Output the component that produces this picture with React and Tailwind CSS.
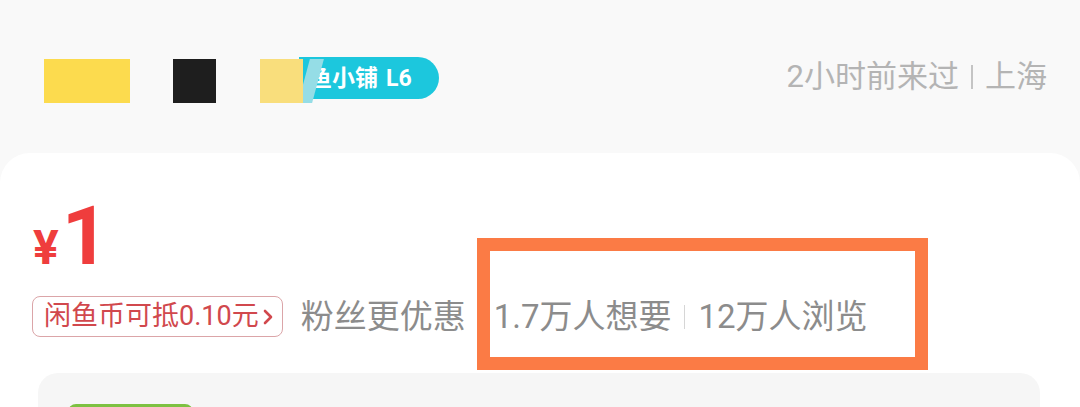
import React from "react";

const FONT = { fontFamily: '"Roboto", "Noto Sans CJK SC", sans-serif' };

function ShopBadge() {
  return (
    <div className="relative flex items-center">
      <div className="relative z-20 mt-[6px] h-[44px] w-[43px] bg-[#f9de7c]" />
      <div className="absolute left-[44px] top-[6px] z-10 h-[44px] w-[14px] -skew-x-[15deg] bg-[#95dde6]" />
      <div className="-ml-[4px] flex h-[42px] items-center rounded-r-full bg-[#1cc7dd] pl-[10px] pr-[27px] text-[23px] font-bold leading-none text-white">
        <span>鱼小铺</span>
        <span className="ml-[8px]">L6</span>
      </div>
    </div>
  );
}

function Chevron() {
  return (
    <svg width="12" height="18" viewBox="0 0 12 18" className="ml-[3px]">
      <path d="M3 3 L9 9 L3 15" fill="none" stroke="#d1484d" strokeWidth="2.6" strokeLinecap="round" strokeLinejoin="round" />
    </svg>
  );
}

export default function App() {
  return (
    <div className="relative h-[407px] w-[1080px] overflow-hidden bg-[#f9f9f9]" style={FONT}>
      {/* header strip */}
      <div className="flex h-[153px] items-start pt-[53px] pr-[33px]">
        <div className="ml-[44px] mt-[6px] h-[44px] w-[86px] bg-[#fcdb4e]" />
        <div className="ml-[43px] mt-[6px] h-[44px] w-[43px] bg-[#1e1e1e]" />
        <div className="ml-[44px] flex items-start">
          <ShopBadge />
        </div>
        <div className="ml-auto mt-[8px] flex items-center text-[31px] leading-none text-[#b4b4b4]">
          <span>2小时前来过</span>
          <span className="mx-[12px] h-[24px] w-[2px] bg-[#c4c4c4]" />
          <span>上海</span>
        </div>
      </div>

      {/* card */}
      <div className="rounded-t-[30px] bg-white pt-[42px]">
        <div className="flex items-baseline pl-[33px] font-bold leading-none text-[#ef3d3d]">
          <span className="text-[48px]">¥</span>
          <span className="ml-[3px] text-[82px]">1</span>
        </div>

        <div className="mt-[19px] flex items-center pl-[32px]">
          <div className="flex h-[41px] items-center rounded-[8px] border-[1.5px] border-[#dba5a8] pl-[11px] pr-[8px] text-[27px] leading-none text-[#d1484d]">
            <span>闲鱼币可抵0.10元</span>
            <Chevron />
          </div>
          <div className="ml-[18px] flex items-center text-[33px] leading-none text-[#8c8c8c]">
            <span>粉丝更优惠</span>
            <span className="ml-[28px]">1.7万人想要</span>
            <span className="mx-[13px] h-[24px] w-px bg-[#d6d6d6]" />
            <span>12万人浏览</span>
          </div>
        </div>

        <div className="ml-[38px] mr-[40px] mt-[36px] h-[80px] rounded-[20px] bg-[#f6f6f6] pl-[30px] pt-[31px]">
          <div className="h-[30px] w-[125px] rounded-[8px] bg-[#7dc142]" />
        </div>
      </div>

      {/* highlight annotation */}
      <div className="absolute left-[477px] top-[238px] h-[132px] w-[451px] border-[13px] border-[#fb7b45]" />
    </div>
  );
}
